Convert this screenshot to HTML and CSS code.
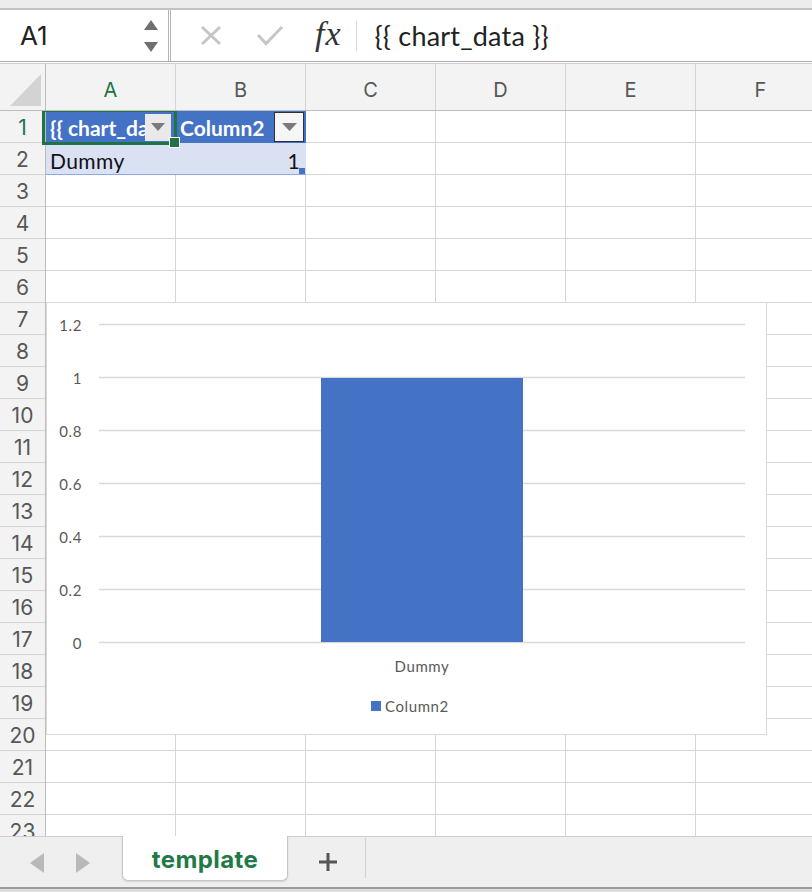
FILE: index.html
```html
<!DOCTYPE html>
<html>
<head>
<meta charset="utf-8">
<link rel="stylesheet" href="styles.css">
</head>
<body>
<div class="app">
  <div class="topstrip"></div>
  <div class="fbar">
    <div class="namebox">
      <span class="nametext">A1</span>
      <div class="spin">
        <svg width="14" height="10" viewBox="0 0 14 10"><polygon points="7,0 14,10 0,10" fill="#6f6f6f"/></svg>
        <svg width="14" height="10" viewBox="0 0 14 10"><polygon points="0,0 14,0 7,10" fill="#6f6f6f"/></svg>
      </div>
    </div>
    <svg class="ic-x" width="22" height="21" viewBox="0 0 22 21"><path d="M2 2 L20 19 M20 2 L2 19" stroke="#c6c6c6" stroke-width="3" fill="none"/></svg>
    <svg class="ic-check" width="28" height="21" viewBox="0 0 28 21"><path d="M2 10 L10 18.5 L26 2" stroke="#c6c6c6" stroke-width="3" fill="none"/></svg>
    <span class="fx">fx</span>
    <span class="fsep"></span>
    <span class="formula">{{ chart_data }}</span>
  </div>

  <div class="sheet">
    <div class="colheads">
      <div class="corner">
        <svg width="31" height="32" viewBox="0 0 31 32"><polygon points="31,0 31,32 0,32" fill="#d3d3d3"/></svg>
      </div>
      <div class="ch ch-sel">A</div>
      <div class="ch">B</div>
      <div class="ch">C</div>
      <div class="ch">D</div>
      <div class="ch">E</div>
      <div class="ch">F</div>
    </div>
    <div class="sheetbody">
      <div class="rowheads">
        <div class="rh rh-sel">1</div>
        <div class="rh">2</div>
        <div class="rh">3</div>
        <div class="rh">4</div>
        <div class="rh">5</div>
        <div class="rh">6</div>
        <div class="rh">7</div>
        <div class="rh">8</div>
        <div class="rh">9</div>
        <div class="rh">10</div>
        <div class="rh">11</div>
        <div class="rh">12</div>
        <div class="rh">13</div>
        <div class="rh">14</div>
        <div class="rh">15</div>
        <div class="rh">16</div>
        <div class="rh">17</div>
        <div class="rh">18</div>
        <div class="rh">19</div>
        <div class="rh">20</div>
        <div class="rh">21</div>
        <div class="rh">22</div>
        <div class="rh">23</div>
      </div>
      <div class="cells">
        <div class="table">
          <div class="th">
            <span class="thtext">{{ chart_data }}</span>
            <span class="dd dd-a">
              <svg width="14" height="8" viewBox="0 0 14 8"><polygon points="0,0 14,0 7,8" fill="#7a7a7a"/></svg>
            </span>
          </div>
          <div class="th">
            <span class="thtext">Column2</span>
            <span class="dd dd-b">
              <svg width="15" height="8" viewBox="0 0 15 8"><polygon points="0,0 15,0 7.5,8" fill="#7a7a7a"/></svg>
            </span>
          </div>
          <div class="td">Dummy</div>
          <div class="td td-num">1<span class="resize"></span></div>
        </div>

        <div class="selection"><span class="handle"></span></div>

        <div class="chart">
          <svg class="plot" width="719" height="431" viewBox="0 0 719 431">
            <g stroke="#d9d9d9" stroke-width="1.3">
              <line x1="52" x2="698" y1="21.5" y2="21.5"/>
              <line x1="52" x2="698" y1="74.5" y2="74.5"/>
              <line x1="52" x2="698" y1="127.5" y2="127.5"/>
              <line x1="52" x2="698" y1="180.5" y2="180.5"/>
              <line x1="52" x2="698" y1="233.5" y2="233.5"/>
              <line x1="52" x2="698" y1="286.5" y2="286.5"/>
              <line x1="52" x2="698" y1="339.5" y2="339.5"/>
            </g>
            <rect x="274" y="75" width="202" height="264" fill="#4472c4"/>
            <g class="axis" text-anchor="end" dominant-baseline="central">
              <text x="35" y="21.5">1.2</text>
              <text x="35" y="74.5">1</text>
              <text x="35" y="127.5">0.8</text>
              <text x="35" y="180.5">0.6</text>
              <text x="35" y="233.5">0.4</text>
              <text x="35" y="286.5">0.2</text>
              <text x="35" y="339.5">0</text>
            </g>
            <text class="axis" x="375" y="363" text-anchor="middle" dominant-baseline="central">Dummy</text>
            <rect x="324" y="398" width="10" height="10" fill="#4472c4"/>
            <text class="axis" x="338" y="403" dominant-baseline="central">Column2</text>
          </svg>
        </div>
      </div>
    </div>
  </div>

  <div class="tabbar">
    <svg class="nav nav-l" width="14" height="20" viewBox="0 0 14 20"><polygon points="14,0 14,20 0,10" fill="#b9b9b9"/></svg>
    <svg class="nav nav-r" width="14" height="20" viewBox="0 0 14 20"><polygon points="0,0 14,10 0,20" fill="#b9b9b9"/></svg>
    <div class="tab">template</div>
    <svg class="plus" width="20" height="20" viewBox="0 0 20 20"><path d="M10 1 V19 M1 10 H19" stroke="#555" stroke-width="3" fill="none"/></svg>
    <span class="tabsep"></span>
  </div>
  <div class="bottomedge"></div>
</div>
</body>
</html>
```

FILE: styles.css
```css
* { box-sizing: border-box; }

html, body {
  margin: 0;
  padding: 0;
  background: #ffffff;
}

.app {
  width: 812px;
  height: 892px;
  display: flex;
  flex-direction: column;
  overflow: hidden;
  font-family: "Lato", "Open Sans", sans-serif;
}

/* ---------- top strip ---------- */
.topstrip {
  flex: 0 0 10px;
  background: #ececec;
  border-bottom: 2px solid #c3c3c3;
}

/* ---------- formula bar ---------- */
.fbar {
  flex: 0 0 52px;
  display: flex;
  align-items: center;
  background: #ffffff;
  border-bottom: 1px solid #aaaaaa;
}

.namebox {
  width: 171px;
  height: 100%;
  display: flex;
  align-items: center;
  border-right: 3px double #b4b4b4;
  position: relative;
}

.nametext {
  margin-left: 20px;
  font-family: "Inter", "Liberation Sans", sans-serif;
  font-size: 26px;
  color: #222;
}

.spin {
  margin-left: auto;
  margin-right: 10px;
  display: flex;
  flex-direction: column;
  gap: 12px;
  padding-top: 1px;
}

.spin svg { display: block; }

.ic-x { margin-left: 29px; display: block; }
.ic-check { margin-left: 34px; display: block; }

.fx {
  margin-left: 31px;
  font-family: "Liberation Serif", "DejaVu Serif", serif;
  font-style: italic;
  font-size: 34px;
  letter-spacing: 1px;
  color: #333;
  line-height: 1;
  margin-top: -4px;
}

.fsep {
  width: 1px;
  height: 30px;
  background: #d8d8d8;
  margin-left: 14px;
}

.formula {
  margin-left: 18px;
  font-size: 27px;
  letter-spacing: 0.2px;
  color: #222;
  white-space: nowrap;
}

/* ---------- sheet ---------- */
.sheet {
  flex: 1 1 auto;
  display: flex;
  flex-direction: column;
  overflow: hidden;
  padding-top: 1px;
  background: #ffffff;
}

.colheads {
  flex: 0 0 48px;
  display: flex;
  border-top: 1px solid #cfcfcf;
  border-bottom: 1px solid #bcbcbc;
  background: #f3f3f3;
}

.corner {
  width: 46px;
  flex: 0 0 46px;
  border-right: 1px solid #bcbcbc;
  display: flex;
  align-items: flex-end;
  justify-content: flex-end;
  padding: 0 4px 4px 0;
}

.corner svg { display: block; }

.ch {
  width: 130px;
  flex: 0 0 130px;
  border-right: 1px solid #d4d4d4;
  display: flex;
  align-items: center;
  justify-content: center;
  padding-top: 6px;
  font-family: "Inter", "Liberation Sans", sans-serif;
  font-size: 20px;
  color: #575757;
}

.ch-sel { color: #217346; }

.sheetbody {
  flex: 1 1 auto;
  display: flex;
  overflow: hidden;
}

.rowheads {
  width: 46px;
  flex: 0 0 46px;
  background: #f3f3f3;
  border-right: 1px solid #bcbcbc;
  display: flex;
  flex-direction: column;
}

.rh {
  flex: 0 0 32px;
  height: 32px;
  border-bottom: 1px solid #d4d4d4;
  display: flex;
  align-items: center;
  justify-content: center;
  padding-top: 2px;
  font-family: "Inter", "Liberation Sans", sans-serif;
  font-size: 21px;
  color: #575757;
}

.rh-sel { color: #217346; }

.cells {
  flex: 1 1 auto;
  position: relative;
  background-image:
    repeating-linear-gradient(90deg, transparent 0 129px, #d6d6d6 129px 130px),
    repeating-linear-gradient(180deg, transparent 0 31px, #d6d6d6 31px 32px);
}

/* ---------- table ---------- */
.table {
  display: grid;
  grid-template-columns: 130px 130px;
  grid-template-rows: 32px 32px;
  width: 259px;
}

.th {
  background: #4472c4;
  color: #ffffff;
  font-weight: 700;
  font-size: 21px;
  display: flex;
  align-items: center;
  padding-left: 4px;
  padding-top: 1px;
  overflow: hidden;
  white-space: nowrap;
  border-bottom: 1px solid #4472c4;
}

.thtext {
  flex: 1 1 auto;
  overflow: hidden;
  white-space: nowrap;
}

.dd {
  flex: 0 0 auto;
  display: flex;
  align-items: center;
  justify-content: center;
}

.dd-a {
  width: 26px;
  height: 27px;
  background: #e9e9e9;
  margin-right: 5px;
}

.dd-b {
  width: 30px;
  height: 30px;
  background: #f6f6f6;
  border: 1.5px solid #2f2f3a;
  margin-right: 2px;
}

.td {
  background: #d9e1f2;
  border-bottom: 1px solid #8ea9db;
  font-size: 21px;
  letter-spacing: 0.4px;
  color: #111;
  display: flex;
  align-items: center;
  padding-left: 4px;
  padding-top: 3px;
}

.td-num {
  justify-content: flex-end;
  padding-right: 6px;
  position: relative;
}

.resize {
  position: absolute;
  right: 1px;
  bottom: 0;
  width: 6px;
  height: 6px;
  background: #4472c4;
}

/* ---------- selection ---------- */
.selection {
  position: absolute;
  left: -4px;
  top: -2px;
  width: 135px;
  height: 36px;
  border: 3px solid #217346;
  pointer-events: none;
}

.handle {
  position: absolute;
  right: -6px;
  bottom: -6px;
  width: 11px;
  height: 11px;
  background: #217346;
  border: 1px solid #ffffff;
}

/* ---------- chart ---------- */
.chart {
  position: absolute;
  left: 0;
  top: 191px;
  width: 721px;
  height: 433px;
  background: #ffffff;
  border: 1px solid #d9d9d9;
}

.plot { display: block; }

.axis {
  font-family: "Lato", "Open Sans", sans-serif;
  font-size: 15px;
  fill: #595959;
  letter-spacing: 0.6px;
}

/* ---------- tab bar ---------- */
.tabbar {
  flex: 0 0 53px;
  display: flex;
  align-items: center;
  background: #efefef;
  border-top: 1px solid #cdcdcd;
  border-bottom: 2px solid #9b9b9b;
}

.nav { display: block; margin-top: 1px; }
.nav-l { margin-left: 30px; }
.nav-r { margin-left: 32px; }

.tab {
  align-self: flex-start;
  margin-top: -1px;
  margin-left: 32px;
  width: 166px;
  height: 45px;
  background: #ffffff;
  border: 1px solid #c6c6c6;
  border-top: none;
  border-radius: 0 0 6px 6px;
  box-shadow: 0 1px 2px rgba(0, 0, 0, 0.12);
  display: flex;
  align-items: center;
  justify-content: center;
  padding-top: 3px;
  font-family: "Inter", "Liberation Sans", sans-serif;
  font-weight: 700;
  font-size: 24px;
  letter-spacing: 0.4px;
  color: #1f7a47;
}

.plus {
  display: block;
  margin-left: 30px;
}

.tabsep {
  width: 1px;
  height: 40px;
  background: #cfcfcf;
  margin-left: 27px;
  align-self: flex-start;
  margin-top: 1px;
}

.bottomedge {
  flex: 0 0 3px;
  background: #dedede;
}
```
